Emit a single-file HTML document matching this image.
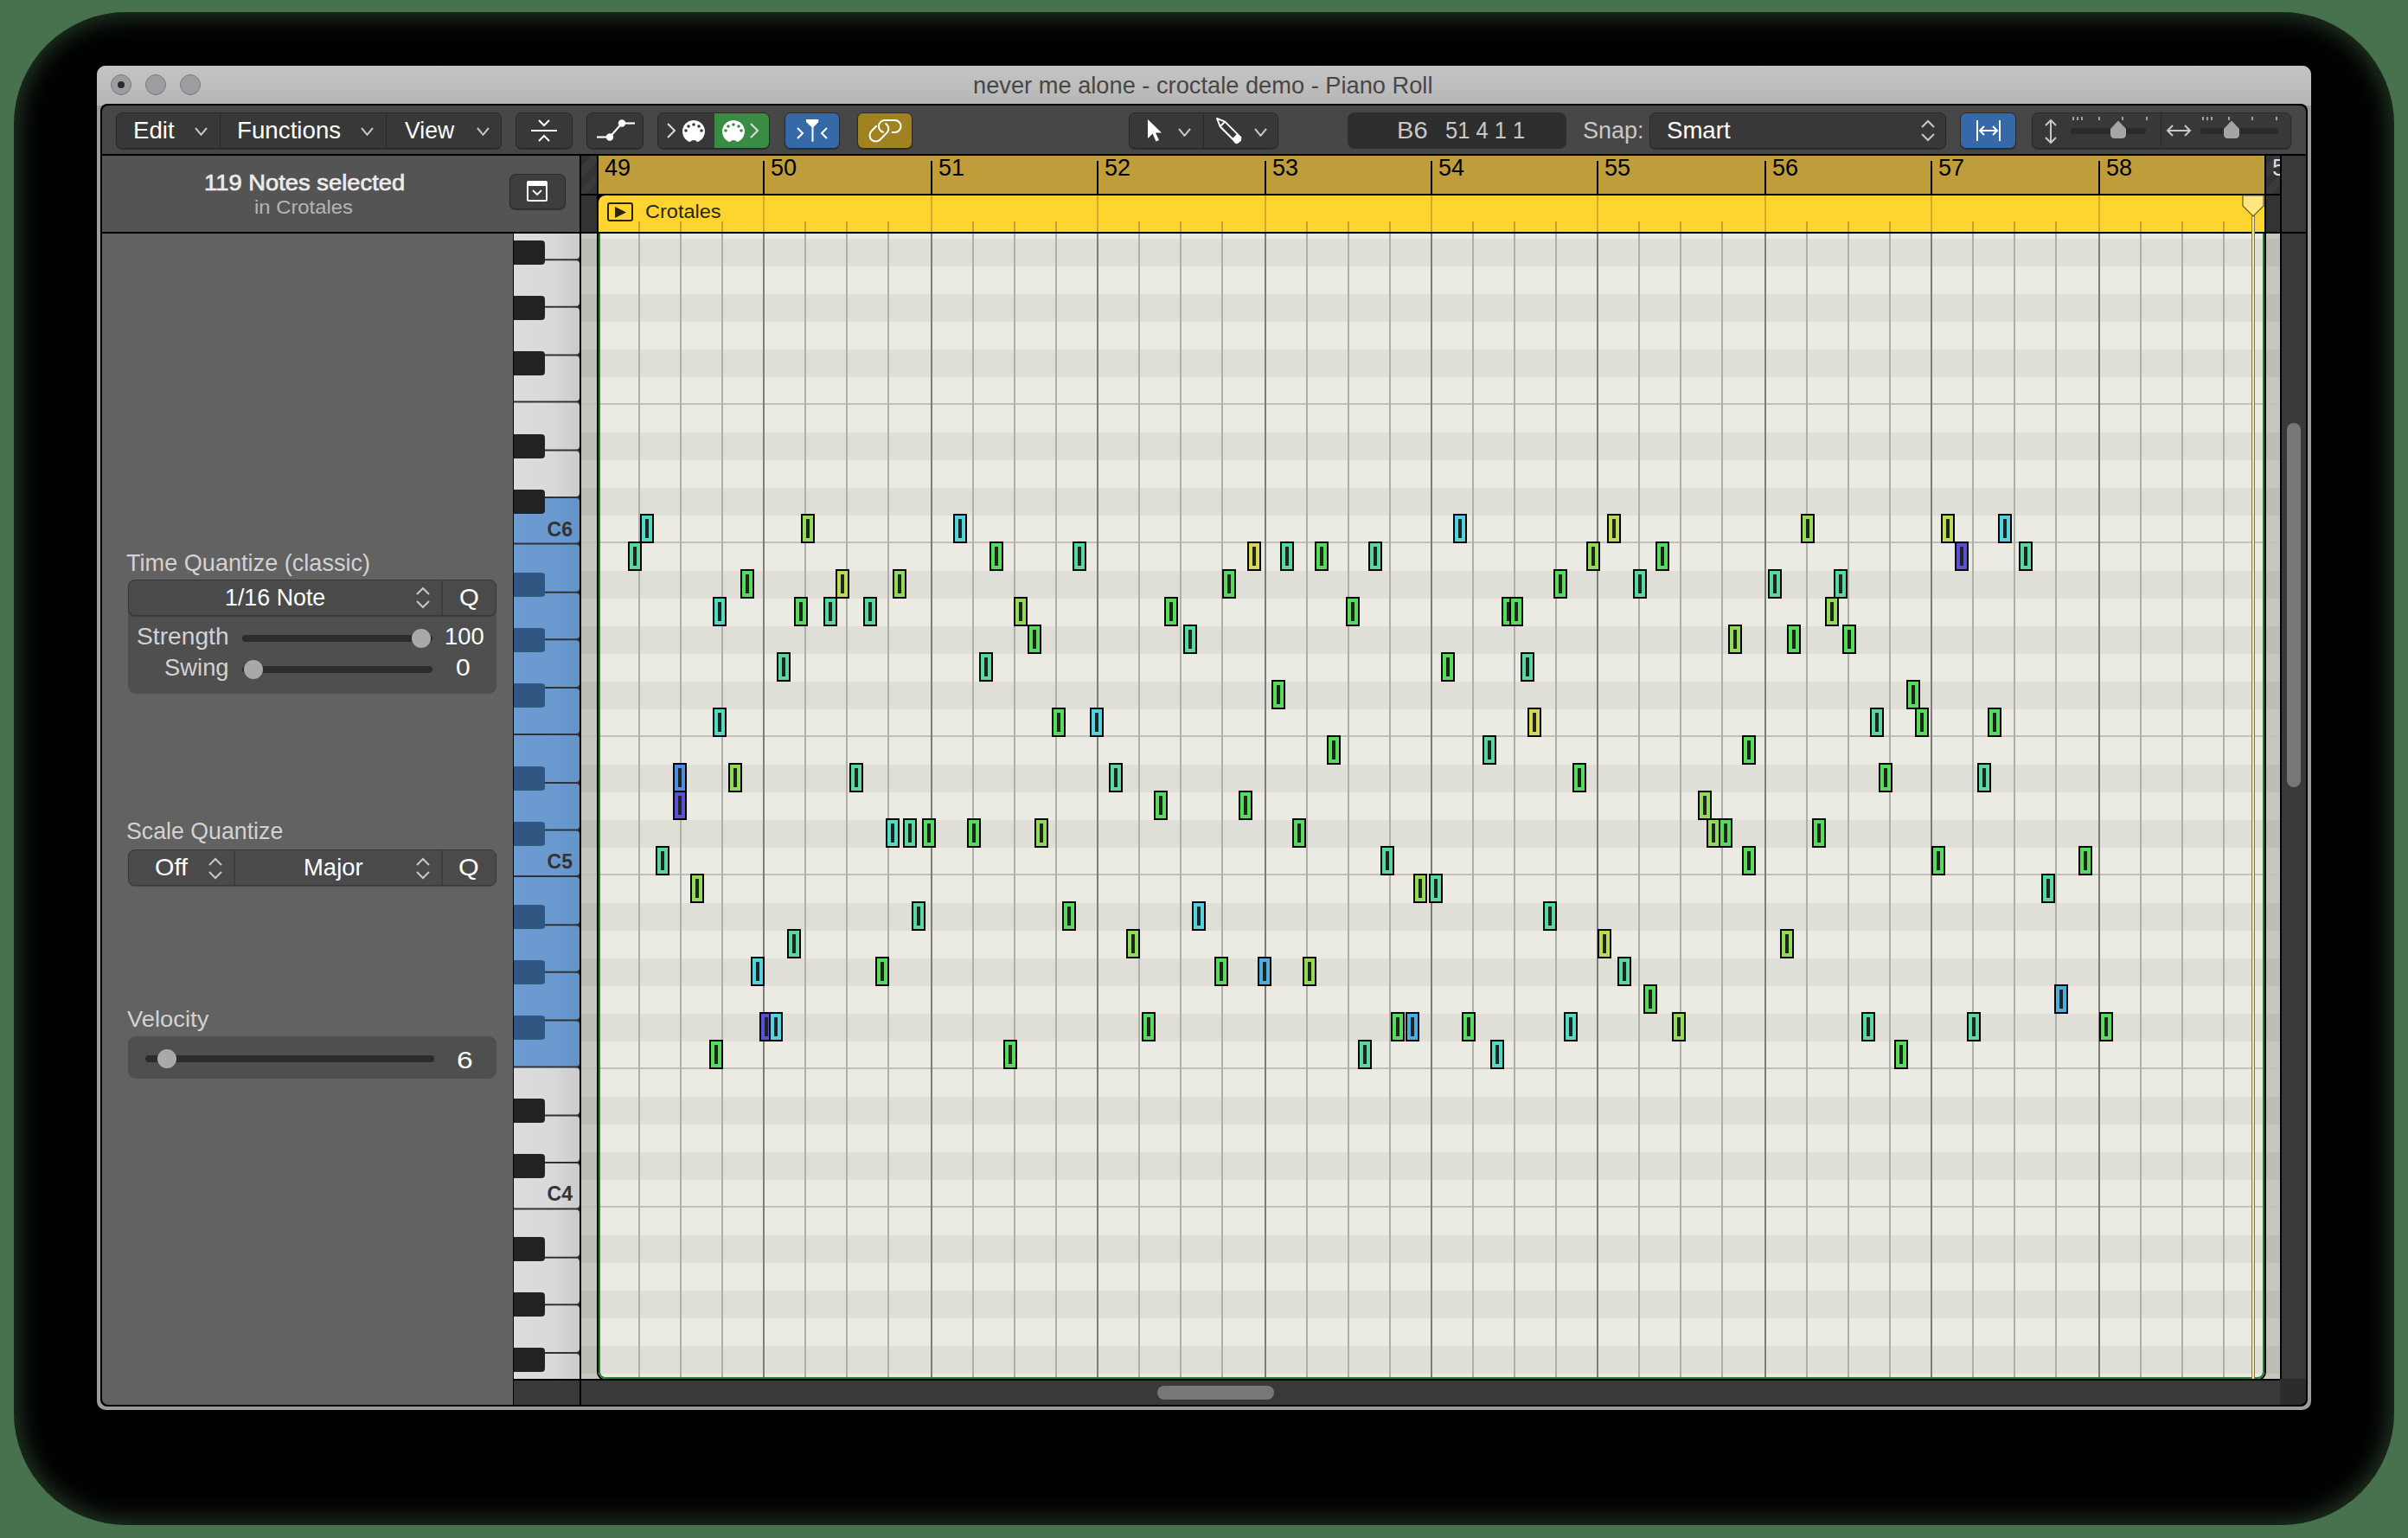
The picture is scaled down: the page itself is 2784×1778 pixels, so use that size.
<!DOCTYPE html>
<html><head><meta charset="utf-8"><title>Piano Roll</title>
<style>
*{box-sizing:border-box;margin:0;padding:0}
html,body{width:2784px;height:1778px;overflow:hidden;background:#48724e;font-family:"Liberation Sans", sans-serif}
.a{position:absolute}
.btn{position:absolute;background:#383838;border:1px solid #2a2a2a;border-radius:7px;box-shadow:0 1px 1px rgba(0,0,0,.35)}
.t{position:absolute;white-space:nowrap;line-height:1}
</style></head><body>

<div class="a" style="left:16px;top:14px;width:2752px;height:1749px;border-radius:130px;background:#000;box-shadow:inset 0 0 30px 4px rgba(72,114,78,0.55)"></div>
<div class="a" style="left:112px;top:76px;width:2560px;height:1554px;border-radius:10px;background:#9c9c9c"></div>
<div class="a" style="left:112px;top:76px;width:2560px;height:46px;border-radius:10px 10px 0 0;background:linear-gradient(#c4c4c4,#b6b6b6)"></div>
<div class="a" style="left:128px;top:86px;width:24px;height:24px;border-radius:50%;background:#9d9ca1;border:1px solid #7b7a7f"></div>
<div class="a" style="left:168px;top:86px;width:24px;height:24px;border-radius:50%;background:#9d9ca1;border:1px solid #7b7a7f"></div>
<div class="a" style="left:208px;top:86px;width:24px;height:24px;border-radius:50%;background:#9d9ca1;border:1px solid #7b7a7f"></div>
<div class="a" style="left:136px;top:94px;width:8px;height:8px;border-radius:50%;background:#2a2a2a"></div>
<div class="t" style="left:1124.69px;top:84.59px;font-size:27.54px;font-weight:normal;color:#474747;transform:scaleX(0.9895);transform-origin:0 0;">never me alone - croctale demo - Piano Roll</div>
<div class="a" style="left:116px;top:120px;width:2552px;height:1506px;background:#000;border-radius:8px 8px 8px 8px"></div>
<div class="a" style="left:118px;top:122px;width:2548px;height:56px;background:#474747;border-radius:7px 7px 0 0"></div>
<div class="a" style="left:118px;top:180px;width:552px;height:88px;background:#545454"></div>
<div class="a" style="left:672px;top:180px;width:18px;height:44px;background:repeating-linear-gradient(135deg,#333 0 9px,#3b3b3b 9px 18px)"></div>
<div class="a" style="left:672px;top:226px;width:18px;height:42px;background:#333"></div>
<div class="a" style="left:692px;top:180px;width:1926px;height:44px;background:#bf9d3b"></div>
<div class="a" style="left:692px;top:226px;width:1926px;height:42px;background:#fed42f;border-radius:8px 0 0 0"></div>
<div class="a" style="left:2620px;top:180px;width:16px;height:44px;background:repeating-linear-gradient(135deg,#333 0 9px,#3b3b3b 9px 18px)"></div>
<div class="a" style="left:2620px;top:226px;width:16px;height:42px;background:#333"></div>
<div class="a" style="left:2638px;top:180px;width:28px;height:88px;background:#393939"></div>
<div class="a" style="left:118px;top:270px;width:475px;height:1354px;background:#626262;border-radius:0 0 0 7px"></div>
<div class="a" style="left:594px;top:1596px;width:76px;height:28px;background:#393939"></div>
<div class="a" style="left:672px;top:1596px;width:1964px;height:28px;background:#393939"></div>
<div class="a" style="left:2638px;top:270px;width:28px;height:1324px;background:#393939"></div>
<div class="a" style="left:2636px;top:1594px;width:30px;height:30px;background:#2c2c2c;border-radius:0 0 7px 0"></div>
<div class="a" style="left:1338px;top:1602px;width:135px;height:16px;border-radius:8px;background:#777"></div>
<div class="a" style="left:2644px;top:489px;width:16px;height:421px;border-radius:8px;background:#777"></div>
<svg class="a" style="left:672px;top:270px" width="1964" height="1324" viewBox="672 270 1964 1324" shape-rendering="crispEdges"><defs><clipPath id="rg"><path d="M692,260 H2618 V1586 A8,8 0 0 1 2610,1594 H700 A8,8 0 0 1 692,1586 Z"/></clipPath></defs><rect x="672" y="270" width="1964" height="6" fill="#c7c7bf"/><rect x="672" y="276" width="1964" height="32" fill="#bdbdb5"/><rect x="672" y="308" width="1964" height="32" fill="#c7c7bf"/><rect x="672" y="340" width="1964" height="32" fill="#bdbdb5"/><rect x="672" y="372" width="1964" height="32" fill="#c7c7bf"/><rect x="672" y="404" width="1964" height="32" fill="#bdbdb5"/><rect x="672" y="436" width="1964" height="32" fill="#c7c7bf"/><rect x="672" y="468" width="1964" height="32" fill="#c7c7bf"/><rect x="672" y="500" width="1964" height="32" fill="#bdbdb5"/><rect x="672" y="532" width="1964" height="32" fill="#c7c7bf"/><rect x="672" y="564" width="1964" height="32" fill="#bdbdb5"/><rect x="672" y="596" width="1964" height="32" fill="#c7c7bf"/><rect x="672" y="628" width="1964" height="32" fill="#c7c7bf"/><rect x="672" y="660" width="1964" height="32" fill="#bdbdb5"/><rect x="672" y="692" width="1964" height="32" fill="#c7c7bf"/><rect x="672" y="724" width="1964" height="32" fill="#bdbdb5"/><rect x="672" y="756" width="1964" height="32" fill="#c7c7bf"/><rect x="672" y="788" width="1964" height="32" fill="#bdbdb5"/><rect x="672" y="820" width="1964" height="32" fill="#c7c7bf"/><rect x="672" y="852" width="1964" height="32" fill="#c7c7bf"/><rect x="672" y="884" width="1964" height="32" fill="#bdbdb5"/><rect x="672" y="916" width="1964" height="32" fill="#c7c7bf"/><rect x="672" y="948" width="1964" height="32" fill="#bdbdb5"/><rect x="672" y="980" width="1964" height="32" fill="#c7c7bf"/><rect x="672" y="1012" width="1964" height="32" fill="#c7c7bf"/><rect x="672" y="1044" width="1964" height="32" fill="#bdbdb5"/><rect x="672" y="1076" width="1964" height="32" fill="#c7c7bf"/><rect x="672" y="1108" width="1964" height="32" fill="#bdbdb5"/><rect x="672" y="1140" width="1964" height="32" fill="#c7c7bf"/><rect x="672" y="1172" width="1964" height="32" fill="#bdbdb5"/><rect x="672" y="1204" width="1964" height="32" fill="#c7c7bf"/><rect x="672" y="1236" width="1964" height="32" fill="#c7c7bf"/><rect x="672" y="1268" width="1964" height="32" fill="#bdbdb5"/><rect x="672" y="1300" width="1964" height="32" fill="#c7c7bf"/><rect x="672" y="1332" width="1964" height="32" fill="#bdbdb5"/><rect x="672" y="1364" width="1964" height="32" fill="#c7c7bf"/><rect x="672" y="1396" width="1964" height="32" fill="#c7c7bf"/><rect x="672" y="1428" width="1964" height="32" fill="#bdbdb5"/><rect x="672" y="1460" width="1964" height="32" fill="#c7c7bf"/><rect x="672" y="1492" width="1964" height="32" fill="#bdbdb5"/><rect x="672" y="1524" width="1964" height="32" fill="#c7c7bf"/><rect x="672" y="1556" width="1964" height="32" fill="#bdbdb5"/><rect x="672" y="1588" width="1964" height="6" fill="#c7c7bf"/><rect x="672" y="466" width="1964" height="2" fill="#c2c2ba"/><rect x="672" y="626" width="1964" height="2" fill="#c2c2ba"/><rect x="672" y="850" width="1964" height="2" fill="#c2c2ba"/><rect x="672" y="1010" width="1964" height="2" fill="#c2c2ba"/><rect x="672" y="1234" width="1964" height="2" fill="#c2c2ba"/><rect x="672" y="1394" width="1964" height="2" fill="#c2c2ba"/><path d="M690,260 V1586 A10,10 0 0 0 700,1596 H2610 A10,10 0 0 0 2620,1586 V260 Z" fill="#000" shape-rendering="auto"/><g clip-path="url(#rg)"><rect x="692" y="270" width="1926" height="6" fill="#ebebe3"/><rect x="692" y="276" width="1926" height="32" fill="#dfdfd7"/><rect x="692" y="308" width="1926" height="32" fill="#ebebe3"/><rect x="692" y="340" width="1926" height="32" fill="#dfdfd7"/><rect x="692" y="372" width="1926" height="32" fill="#ebebe3"/><rect x="692" y="404" width="1926" height="32" fill="#dfdfd7"/><rect x="692" y="436" width="1926" height="32" fill="#ebebe3"/><rect x="692" y="468" width="1926" height="32" fill="#ebebe3"/><rect x="692" y="500" width="1926" height="32" fill="#dfdfd7"/><rect x="692" y="532" width="1926" height="32" fill="#ebebe3"/><rect x="692" y="564" width="1926" height="32" fill="#dfdfd7"/><rect x="692" y="596" width="1926" height="32" fill="#ebebe3"/><rect x="692" y="628" width="1926" height="32" fill="#ebebe3"/><rect x="692" y="660" width="1926" height="32" fill="#dfdfd7"/><rect x="692" y="692" width="1926" height="32" fill="#ebebe3"/><rect x="692" y="724" width="1926" height="32" fill="#dfdfd7"/><rect x="692" y="756" width="1926" height="32" fill="#ebebe3"/><rect x="692" y="788" width="1926" height="32" fill="#dfdfd7"/><rect x="692" y="820" width="1926" height="32" fill="#ebebe3"/><rect x="692" y="852" width="1926" height="32" fill="#ebebe3"/><rect x="692" y="884" width="1926" height="32" fill="#dfdfd7"/><rect x="692" y="916" width="1926" height="32" fill="#ebebe3"/><rect x="692" y="948" width="1926" height="32" fill="#dfdfd7"/><rect x="692" y="980" width="1926" height="32" fill="#ebebe3"/><rect x="692" y="1012" width="1926" height="32" fill="#ebebe3"/><rect x="692" y="1044" width="1926" height="32" fill="#dfdfd7"/><rect x="692" y="1076" width="1926" height="32" fill="#ebebe3"/><rect x="692" y="1108" width="1926" height="32" fill="#dfdfd7"/><rect x="692" y="1140" width="1926" height="32" fill="#ebebe3"/><rect x="692" y="1172" width="1926" height="32" fill="#dfdfd7"/><rect x="692" y="1204" width="1926" height="32" fill="#ebebe3"/><rect x="692" y="1236" width="1926" height="32" fill="#ebebe3"/><rect x="692" y="1268" width="1926" height="32" fill="#dfdfd7"/><rect x="692" y="1300" width="1926" height="32" fill="#ebebe3"/><rect x="692" y="1332" width="1926" height="32" fill="#dfdfd7"/><rect x="692" y="1364" width="1926" height="32" fill="#ebebe3"/><rect x="692" y="1396" width="1926" height="32" fill="#ebebe3"/><rect x="692" y="1428" width="1926" height="32" fill="#dfdfd7"/><rect x="692" y="1460" width="1926" height="32" fill="#ebebe3"/><rect x="692" y="1492" width="1926" height="32" fill="#dfdfd7"/><rect x="692" y="1524" width="1926" height="32" fill="#ebebe3"/><rect x="692" y="1556" width="1926" height="32" fill="#dfdfd7"/><rect x="692" y="1588" width="1926" height="6" fill="#ebebe3"/><rect x="672" y="466" width="1964" height="2" fill="#c2c2ba"/><rect x="672" y="626" width="1964" height="2" fill="#c2c2ba"/><rect x="672" y="850" width="1964" height="2" fill="#c2c2ba"/><rect x="672" y="1010" width="1964" height="2" fill="#c2c2ba"/><rect x="672" y="1234" width="1964" height="2" fill="#c2c2ba"/><rect x="672" y="1394" width="1964" height="2" fill="#c2c2ba"/><rect x="738" y="270" width="2" height="1324" fill="#afafaa"/><rect x="786" y="270" width="2" height="1324" fill="#afafaa"/><rect x="834" y="270" width="2" height="1324" fill="#afafaa"/><rect x="882" y="270" width="2" height="1324" fill="#7c7d79"/><rect x="930" y="270" width="2" height="1324" fill="#afafaa"/><rect x="978" y="270" width="2" height="1324" fill="#afafaa"/><rect x="1026" y="270" width="2" height="1324" fill="#afafaa"/><rect x="1076" y="270" width="2" height="1324" fill="#7c7d79"/><rect x="1124" y="270" width="2" height="1324" fill="#afafaa"/><rect x="1172" y="270" width="2" height="1324" fill="#afafaa"/><rect x="1220" y="270" width="2" height="1324" fill="#afafaa"/><rect x="1268" y="270" width="2" height="1324" fill="#7c7d79"/><rect x="1316" y="270" width="2" height="1324" fill="#afafaa"/><rect x="1364" y="270" width="2" height="1324" fill="#afafaa"/><rect x="1412" y="270" width="2" height="1324" fill="#afafaa"/><rect x="1462" y="270" width="2" height="1324" fill="#7c7d79"/><rect x="1510" y="270" width="2" height="1324" fill="#afafaa"/><rect x="1558" y="270" width="2" height="1324" fill="#afafaa"/><rect x="1606" y="270" width="2" height="1324" fill="#afafaa"/><rect x="1654" y="270" width="2" height="1324" fill="#7c7d79"/><rect x="1702" y="270" width="2" height="1324" fill="#afafaa"/><rect x="1750" y="270" width="2" height="1324" fill="#afafaa"/><rect x="1798" y="270" width="2" height="1324" fill="#afafaa"/><rect x="1846" y="270" width="2" height="1324" fill="#7c7d79"/><rect x="1894" y="270" width="2" height="1324" fill="#afafaa"/><rect x="1942" y="270" width="2" height="1324" fill="#afafaa"/><rect x="1990" y="270" width="2" height="1324" fill="#afafaa"/><rect x="2040" y="270" width="2" height="1324" fill="#7c7d79"/><rect x="2088" y="270" width="2" height="1324" fill="#afafaa"/><rect x="2136" y="270" width="2" height="1324" fill="#afafaa"/><rect x="2184" y="270" width="2" height="1324" fill="#afafaa"/><rect x="2232" y="270" width="2" height="1324" fill="#7c7d79"/><rect x="2280" y="270" width="2" height="1324" fill="#afafaa"/><rect x="2328" y="270" width="2" height="1324" fill="#afafaa"/><rect x="2376" y="270" width="2" height="1324" fill="#afafaa"/><rect x="2426" y="270" width="2" height="1324" fill="#7c7d79"/><rect x="2474" y="270" width="2" height="1324" fill="#afafaa"/><rect x="2522" y="270" width="2" height="1324" fill="#afafaa"/><rect x="2570" y="270" width="2" height="1324" fill="#afafaa"/><rect x="740" y="594" width="16" height="34" fill="#000"/><rect x="742" y="596" width="12" height="30" fill="#50dcc4"/><rect x="746" y="600" width="4" height="22" fill="#1f2420"/><rect x="726" y="626" width="16" height="34" fill="#000"/><rect x="728" y="628" width="12" height="30" fill="#55d99c"/><rect x="732" y="632" width="4" height="22" fill="#1f2420"/><rect x="926" y="594" width="16" height="34" fill="#000"/><rect x="928" y="596" width="12" height="30" fill="#90dc55"/><rect x="932" y="600" width="4" height="22" fill="#1f2420"/><rect x="1102" y="594" width="16" height="34" fill="#000"/><rect x="1104" y="596" width="12" height="30" fill="#50d4e0"/><rect x="1108" y="600" width="4" height="22" fill="#1f2420"/><rect x="1144" y="626" width="16" height="34" fill="#000"/><rect x="1146" y="628" width="12" height="30" fill="#55dc58"/><rect x="1150" y="632" width="4" height="22" fill="#1f2420"/><rect x="856" y="658" width="16" height="34" fill="#000"/><rect x="858" y="660" width="12" height="30" fill="#55dc58"/><rect x="862" y="664" width="4" height="22" fill="#1f2420"/><rect x="966" y="658" width="16" height="34" fill="#000"/><rect x="968" y="660" width="12" height="30" fill="#bcdc50"/><rect x="972" y="664" width="4" height="22" fill="#1f2420"/><rect x="1032" y="658" width="16" height="34" fill="#000"/><rect x="1034" y="660" width="12" height="30" fill="#90dc55"/><rect x="1038" y="664" width="4" height="22" fill="#1f2420"/><rect x="824" y="690" width="16" height="34" fill="#000"/><rect x="826" y="692" width="12" height="30" fill="#50dcc4"/><rect x="830" y="696" width="4" height="22" fill="#1f2420"/><rect x="918" y="690" width="16" height="34" fill="#000"/><rect x="920" y="692" width="12" height="30" fill="#55dc58"/><rect x="924" y="696" width="4" height="22" fill="#1f2420"/><rect x="952" y="690" width="16" height="34" fill="#000"/><rect x="954" y="692" width="12" height="30" fill="#55d99c"/><rect x="958" y="696" width="4" height="22" fill="#1f2420"/><rect x="998" y="690" width="16" height="34" fill="#000"/><rect x="1000" y="692" width="12" height="30" fill="#55d99c"/><rect x="1004" y="696" width="4" height="22" fill="#1f2420"/><rect x="898" y="754" width="16" height="34" fill="#000"/><rect x="900" y="756" width="12" height="30" fill="#55d99c"/><rect x="904" y="760" width="4" height="22" fill="#1f2420"/><rect x="1132" y="754" width="16" height="34" fill="#000"/><rect x="1134" y="756" width="12" height="30" fill="#55d99c"/><rect x="1138" y="760" width="4" height="22" fill="#1f2420"/><rect x="824" y="818" width="16" height="34" fill="#000"/><rect x="826" y="820" width="12" height="30" fill="#50dcc4"/><rect x="830" y="824" width="4" height="22" fill="#1f2420"/><rect x="778" y="882" width="16" height="34" fill="#000"/><rect x="780" y="884" width="12" height="30" fill="#4a8ee0"/><rect x="784" y="888" width="4" height="22" fill="#1f2420"/><rect x="842" y="882" width="16" height="34" fill="#000"/><rect x="844" y="884" width="12" height="30" fill="#90dc55"/><rect x="848" y="888" width="4" height="22" fill="#1f2420"/><rect x="982" y="882" width="16" height="34" fill="#000"/><rect x="984" y="884" width="12" height="30" fill="#55d99c"/><rect x="988" y="888" width="4" height="22" fill="#1f2420"/><rect x="778" y="914" width="16" height="34" fill="#000"/><rect x="780" y="916" width="12" height="30" fill="#5b4fd8"/><rect x="784" y="920" width="4" height="22" fill="#1f2420"/><rect x="1024" y="946" width="16" height="34" fill="#000"/><rect x="1026" y="948" width="12" height="30" fill="#50dcc4"/><rect x="1030" y="952" width="4" height="22" fill="#1f2420"/><rect x="1044" y="946" width="16" height="34" fill="#000"/><rect x="1046" y="948" width="12" height="30" fill="#55d99c"/><rect x="1050" y="952" width="4" height="22" fill="#1f2420"/><rect x="1066" y="946" width="16" height="34" fill="#000"/><rect x="1068" y="948" width="12" height="30" fill="#55dc58"/><rect x="1072" y="952" width="4" height="22" fill="#1f2420"/><rect x="1118" y="946" width="16" height="34" fill="#000"/><rect x="1120" y="948" width="12" height="30" fill="#55dc58"/><rect x="1124" y="952" width="4" height="22" fill="#1f2420"/><rect x="758" y="978" width="16" height="34" fill="#000"/><rect x="760" y="980" width="12" height="30" fill="#55d99c"/><rect x="764" y="984" width="4" height="22" fill="#1f2420"/><rect x="798" y="1010" width="16" height="34" fill="#000"/><rect x="800" y="1012" width="12" height="30" fill="#90dc55"/><rect x="804" y="1016" width="4" height="22" fill="#1f2420"/><rect x="1054" y="1042" width="16" height="34" fill="#000"/><rect x="1056" y="1044" width="12" height="30" fill="#55d99c"/><rect x="1060" y="1048" width="4" height="22" fill="#1f2420"/><rect x="910" y="1074" width="16" height="34" fill="#000"/><rect x="912" y="1076" width="12" height="30" fill="#55d99c"/><rect x="916" y="1080" width="4" height="22" fill="#1f2420"/><rect x="868" y="1106" width="16" height="34" fill="#000"/><rect x="870" y="1108" width="12" height="30" fill="#50d4e0"/><rect x="874" y="1112" width="4" height="22" fill="#1f2420"/><rect x="1012" y="1106" width="16" height="34" fill="#000"/><rect x="1014" y="1108" width="12" height="30" fill="#55dc58"/><rect x="1018" y="1112" width="4" height="22" fill="#1f2420"/><rect x="878" y="1170" width="16" height="34" fill="#000"/><rect x="880" y="1172" width="12" height="30" fill="#5b4fd8"/><rect x="884" y="1176" width="4" height="22" fill="#1f2420"/><rect x="889" y="1170" width="16" height="34" fill="#000"/><rect x="891" y="1172" width="12" height="30" fill="#50d4e0"/><rect x="895" y="1176" width="4" height="22" fill="#1f2420"/><rect x="820" y="1202" width="16" height="34" fill="#000"/><rect x="822" y="1204" width="12" height="30" fill="#55dc58"/><rect x="826" y="1208" width="4" height="22" fill="#1f2420"/><rect x="1160" y="1202" width="16" height="34" fill="#000"/><rect x="1162" y="1204" width="12" height="30" fill="#55dc58"/><rect x="1166" y="1208" width="4" height="22" fill="#1f2420"/><rect x="1240" y="626" width="16" height="34" fill="#000"/><rect x="1242" y="628" width="12" height="30" fill="#55d99c"/><rect x="1246" y="632" width="4" height="22" fill="#1f2420"/><rect x="1442" y="626" width="16" height="34" fill="#000"/><rect x="1444" y="628" width="12" height="30" fill="#d8d850"/><rect x="1448" y="632" width="4" height="22" fill="#1f2420"/><rect x="1480" y="626" width="16" height="34" fill="#000"/><rect x="1482" y="628" width="12" height="30" fill="#55d99c"/><rect x="1486" y="632" width="4" height="22" fill="#1f2420"/><rect x="1520" y="626" width="16" height="34" fill="#000"/><rect x="1522" y="628" width="12" height="30" fill="#55dc58"/><rect x="1526" y="632" width="4" height="22" fill="#1f2420"/><rect x="1582" y="626" width="16" height="34" fill="#000"/><rect x="1584" y="628" width="12" height="30" fill="#55d99c"/><rect x="1588" y="632" width="4" height="22" fill="#1f2420"/><rect x="1413" y="658" width="16" height="34" fill="#000"/><rect x="1415" y="660" width="12" height="30" fill="#55dc58"/><rect x="1419" y="664" width="4" height="22" fill="#1f2420"/><rect x="1172" y="690" width="16" height="34" fill="#000"/><rect x="1174" y="692" width="12" height="30" fill="#90dc55"/><rect x="1178" y="696" width="4" height="22" fill="#1f2420"/><rect x="1346" y="690" width="16" height="34" fill="#000"/><rect x="1348" y="692" width="12" height="30" fill="#55dc58"/><rect x="1352" y="696" width="4" height="22" fill="#1f2420"/><rect x="1556" y="690" width="16" height="34" fill="#000"/><rect x="1558" y="692" width="12" height="30" fill="#55dc58"/><rect x="1562" y="696" width="4" height="22" fill="#1f2420"/><rect x="1188" y="722" width="16" height="34" fill="#000"/><rect x="1190" y="724" width="12" height="30" fill="#55dc58"/><rect x="1194" y="728" width="4" height="22" fill="#1f2420"/><rect x="1368" y="722" width="16" height="34" fill="#000"/><rect x="1370" y="724" width="12" height="30" fill="#55d99c"/><rect x="1374" y="728" width="4" height="22" fill="#1f2420"/><rect x="1470" y="786" width="16" height="34" fill="#000"/><rect x="1472" y="788" width="12" height="30" fill="#55dc58"/><rect x="1476" y="792" width="4" height="22" fill="#1f2420"/><rect x="1216" y="818" width="16" height="34" fill="#000"/><rect x="1218" y="820" width="12" height="30" fill="#55dc58"/><rect x="1222" y="824" width="4" height="22" fill="#1f2420"/><rect x="1260" y="818" width="16" height="34" fill="#000"/><rect x="1262" y="820" width="12" height="30" fill="#50d4e0"/><rect x="1266" y="824" width="4" height="22" fill="#1f2420"/><rect x="1534" y="850" width="16" height="34" fill="#000"/><rect x="1536" y="852" width="12" height="30" fill="#55dc58"/><rect x="1540" y="856" width="4" height="22" fill="#1f2420"/><rect x="1282" y="882" width="16" height="34" fill="#000"/><rect x="1284" y="884" width="12" height="30" fill="#55d99c"/><rect x="1288" y="888" width="4" height="22" fill="#1f2420"/><rect x="1334" y="914" width="16" height="34" fill="#000"/><rect x="1336" y="916" width="12" height="30" fill="#55dc58"/><rect x="1340" y="920" width="4" height="22" fill="#1f2420"/><rect x="1432" y="914" width="16" height="34" fill="#000"/><rect x="1434" y="916" width="12" height="30" fill="#55dc58"/><rect x="1438" y="920" width="4" height="22" fill="#1f2420"/><rect x="1196" y="946" width="16" height="34" fill="#000"/><rect x="1198" y="948" width="12" height="30" fill="#90dc55"/><rect x="1202" y="952" width="4" height="22" fill="#1f2420"/><rect x="1494" y="946" width="16" height="34" fill="#000"/><rect x="1496" y="948" width="12" height="30" fill="#55dc58"/><rect x="1500" y="952" width="4" height="22" fill="#1f2420"/><rect x="1596" y="978" width="16" height="34" fill="#000"/><rect x="1598" y="980" width="12" height="30" fill="#55d99c"/><rect x="1602" y="984" width="4" height="22" fill="#1f2420"/><rect x="1634" y="1010" width="16" height="34" fill="#000"/><rect x="1636" y="1012" width="12" height="30" fill="#90dc55"/><rect x="1640" y="1016" width="4" height="22" fill="#1f2420"/><rect x="1228" y="1042" width="16" height="34" fill="#000"/><rect x="1230" y="1044" width="12" height="30" fill="#55dc58"/><rect x="1234" y="1048" width="4" height="22" fill="#1f2420"/><rect x="1378" y="1042" width="16" height="34" fill="#000"/><rect x="1380" y="1044" width="12" height="30" fill="#50d4e0"/><rect x="1384" y="1048" width="4" height="22" fill="#1f2420"/><rect x="1302" y="1074" width="16" height="34" fill="#000"/><rect x="1304" y="1076" width="12" height="30" fill="#90dc55"/><rect x="1308" y="1080" width="4" height="22" fill="#1f2420"/><rect x="1404" y="1106" width="16" height="34" fill="#000"/><rect x="1406" y="1108" width="12" height="30" fill="#55dc58"/><rect x="1410" y="1112" width="4" height="22" fill="#1f2420"/><rect x="1454" y="1106" width="16" height="34" fill="#000"/><rect x="1456" y="1108" width="12" height="30" fill="#4aaee0"/><rect x="1460" y="1112" width="4" height="22" fill="#1f2420"/><rect x="1506" y="1106" width="16" height="34" fill="#000"/><rect x="1508" y="1108" width="12" height="30" fill="#90dc55"/><rect x="1512" y="1112" width="4" height="22" fill="#1f2420"/><rect x="1320" y="1170" width="16" height="34" fill="#000"/><rect x="1322" y="1172" width="12" height="30" fill="#55dc58"/><rect x="1326" y="1176" width="4" height="22" fill="#1f2420"/><rect x="1608" y="1170" width="16" height="34" fill="#000"/><rect x="1610" y="1172" width="12" height="30" fill="#55dc58"/><rect x="1614" y="1176" width="4" height="22" fill="#1f2420"/><rect x="1625" y="1170" width="16" height="34" fill="#000"/><rect x="1627" y="1172" width="12" height="30" fill="#4aaee0"/><rect x="1631" y="1176" width="4" height="22" fill="#1f2420"/><rect x="1570" y="1202" width="16" height="34" fill="#000"/><rect x="1572" y="1204" width="12" height="30" fill="#55d99c"/><rect x="1576" y="1208" width="4" height="22" fill="#1f2420"/><rect x="1680" y="594" width="16" height="34" fill="#000"/><rect x="1682" y="596" width="12" height="30" fill="#50d4e0"/><rect x="1686" y="600" width="4" height="22" fill="#1f2420"/><rect x="1858" y="594" width="16" height="34" fill="#000"/><rect x="1860" y="596" width="12" height="30" fill="#bcdc50"/><rect x="1864" y="600" width="4" height="22" fill="#1f2420"/><rect x="2082" y="594" width="16" height="34" fill="#000"/><rect x="2084" y="596" width="12" height="30" fill="#90dc55"/><rect x="2088" y="600" width="4" height="22" fill="#1f2420"/><rect x="1834" y="626" width="16" height="34" fill="#000"/><rect x="1836" y="628" width="12" height="30" fill="#90dc55"/><rect x="1840" y="632" width="4" height="22" fill="#1f2420"/><rect x="1914" y="626" width="16" height="34" fill="#000"/><rect x="1916" y="628" width="12" height="30" fill="#55dc58"/><rect x="1920" y="632" width="4" height="22" fill="#1f2420"/><rect x="1796" y="658" width="16" height="34" fill="#000"/><rect x="1798" y="660" width="12" height="30" fill="#55dc58"/><rect x="1802" y="664" width="4" height="22" fill="#1f2420"/><rect x="1888" y="658" width="16" height="34" fill="#000"/><rect x="1890" y="660" width="12" height="30" fill="#55d99c"/><rect x="1894" y="664" width="4" height="22" fill="#1f2420"/><rect x="2044" y="658" width="16" height="34" fill="#000"/><rect x="2046" y="660" width="12" height="30" fill="#55d99c"/><rect x="2050" y="664" width="4" height="22" fill="#1f2420"/><rect x="1736" y="690" width="16" height="34" fill="#000"/><rect x="1738" y="692" width="12" height="30" fill="#55dc58"/><rect x="1742" y="696" width="4" height="22" fill="#1f2420"/><rect x="1745" y="690" width="16" height="34" fill="#000"/><rect x="1747" y="692" width="12" height="30" fill="#55dc58"/><rect x="1751" y="696" width="4" height="22" fill="#1f2420"/><rect x="1998" y="722" width="16" height="34" fill="#000"/><rect x="2000" y="724" width="12" height="30" fill="#90dc55"/><rect x="2004" y="728" width="4" height="22" fill="#1f2420"/><rect x="2066" y="722" width="16" height="34" fill="#000"/><rect x="2068" y="724" width="12" height="30" fill="#55dc58"/><rect x="2072" y="728" width="4" height="22" fill="#1f2420"/><rect x="1666" y="754" width="16" height="34" fill="#000"/><rect x="1668" y="756" width="12" height="30" fill="#55dc58"/><rect x="1672" y="760" width="4" height="22" fill="#1f2420"/><rect x="1758" y="754" width="16" height="34" fill="#000"/><rect x="1760" y="756" width="12" height="30" fill="#55d99c"/><rect x="1764" y="760" width="4" height="22" fill="#1f2420"/><rect x="1766" y="818" width="16" height="34" fill="#000"/><rect x="1768" y="820" width="12" height="30" fill="#d8d850"/><rect x="1772" y="824" width="4" height="22" fill="#1f2420"/><rect x="1714" y="850" width="16" height="34" fill="#000"/><rect x="1716" y="852" width="12" height="30" fill="#55d99c"/><rect x="1720" y="856" width="4" height="22" fill="#1f2420"/><rect x="2014" y="850" width="16" height="34" fill="#000"/><rect x="2016" y="852" width="12" height="30" fill="#55dc58"/><rect x="2020" y="856" width="4" height="22" fill="#1f2420"/><rect x="1818" y="882" width="16" height="34" fill="#000"/><rect x="1820" y="884" width="12" height="30" fill="#55dc58"/><rect x="1824" y="888" width="4" height="22" fill="#1f2420"/><rect x="1963" y="914" width="16" height="34" fill="#000"/><rect x="1965" y="916" width="12" height="30" fill="#90dc55"/><rect x="1969" y="920" width="4" height="22" fill="#1f2420"/><rect x="1973" y="946" width="16" height="34" fill="#000"/><rect x="1975" y="948" width="12" height="30" fill="#90dc55"/><rect x="1979" y="952" width="4" height="22" fill="#1f2420"/><rect x="1987" y="946" width="16" height="34" fill="#000"/><rect x="1989" y="948" width="12" height="30" fill="#55dc58"/><rect x="1993" y="952" width="4" height="22" fill="#1f2420"/><rect x="2095" y="946" width="16" height="34" fill="#000"/><rect x="2097" y="948" width="12" height="30" fill="#55dc58"/><rect x="2101" y="952" width="4" height="22" fill="#1f2420"/><rect x="2014" y="978" width="16" height="34" fill="#000"/><rect x="2016" y="980" width="12" height="30" fill="#55dc58"/><rect x="2020" y="984" width="4" height="22" fill="#1f2420"/><rect x="1652" y="1010" width="16" height="34" fill="#000"/><rect x="1654" y="1012" width="12" height="30" fill="#55d99c"/><rect x="1658" y="1016" width="4" height="22" fill="#1f2420"/><rect x="1784" y="1042" width="16" height="34" fill="#000"/><rect x="1786" y="1044" width="12" height="30" fill="#55d99c"/><rect x="1790" y="1048" width="4" height="22" fill="#1f2420"/><rect x="1847" y="1074" width="16" height="34" fill="#000"/><rect x="1849" y="1076" width="12" height="30" fill="#bcdc50"/><rect x="1853" y="1080" width="4" height="22" fill="#1f2420"/><rect x="2058" y="1074" width="16" height="34" fill="#000"/><rect x="2060" y="1076" width="12" height="30" fill="#90dc55"/><rect x="2064" y="1080" width="4" height="22" fill="#1f2420"/><rect x="1870" y="1106" width="16" height="34" fill="#000"/><rect x="1872" y="1108" width="12" height="30" fill="#55d99c"/><rect x="1876" y="1112" width="4" height="22" fill="#1f2420"/><rect x="1900" y="1138" width="16" height="34" fill="#000"/><rect x="1902" y="1140" width="12" height="30" fill="#55dc58"/><rect x="1906" y="1144" width="4" height="22" fill="#1f2420"/><rect x="1690" y="1170" width="16" height="34" fill="#000"/><rect x="1692" y="1172" width="12" height="30" fill="#55dc58"/><rect x="1696" y="1176" width="4" height="22" fill="#1f2420"/><rect x="1808" y="1170" width="16" height="34" fill="#000"/><rect x="1810" y="1172" width="12" height="30" fill="#50dcc4"/><rect x="1814" y="1176" width="4" height="22" fill="#1f2420"/><rect x="1933" y="1170" width="16" height="34" fill="#000"/><rect x="1935" y="1172" width="12" height="30" fill="#90dc55"/><rect x="1939" y="1176" width="4" height="22" fill="#1f2420"/><rect x="1723" y="1202" width="16" height="34" fill="#000"/><rect x="1725" y="1204" width="12" height="30" fill="#50dcc4"/><rect x="1729" y="1208" width="4" height="22" fill="#1f2420"/><rect x="2244" y="594" width="16" height="34" fill="#000"/><rect x="2246" y="596" width="12" height="30" fill="#bcdc50"/><rect x="2250" y="600" width="4" height="22" fill="#1f2420"/><rect x="2310" y="594" width="16" height="34" fill="#000"/><rect x="2312" y="596" width="12" height="30" fill="#50d4e0"/><rect x="2316" y="600" width="4" height="22" fill="#1f2420"/><rect x="2260" y="626" width="16" height="34" fill="#000"/><rect x="2262" y="628" width="12" height="30" fill="#5b4fd8"/><rect x="2266" y="632" width="4" height="22" fill="#1f2420"/><rect x="2334" y="626" width="16" height="34" fill="#000"/><rect x="2336" y="628" width="12" height="30" fill="#55d99c"/><rect x="2340" y="632" width="4" height="22" fill="#1f2420"/><rect x="2120" y="658" width="16" height="34" fill="#000"/><rect x="2122" y="660" width="12" height="30" fill="#55d99c"/><rect x="2126" y="664" width="4" height="22" fill="#1f2420"/><rect x="2110" y="690" width="16" height="34" fill="#000"/><rect x="2112" y="692" width="12" height="30" fill="#90dc55"/><rect x="2116" y="696" width="4" height="22" fill="#1f2420"/><rect x="2130" y="722" width="16" height="34" fill="#000"/><rect x="2132" y="724" width="12" height="30" fill="#55dc58"/><rect x="2136" y="728" width="4" height="22" fill="#1f2420"/><rect x="2204" y="786" width="16" height="34" fill="#000"/><rect x="2206" y="788" width="12" height="30" fill="#55dc58"/><rect x="2210" y="792" width="4" height="22" fill="#1f2420"/><rect x="2162" y="818" width="16" height="34" fill="#000"/><rect x="2164" y="820" width="12" height="30" fill="#55d99c"/><rect x="2168" y="824" width="4" height="22" fill="#1f2420"/><rect x="2214" y="818" width="16" height="34" fill="#000"/><rect x="2216" y="820" width="12" height="30" fill="#55dc58"/><rect x="2220" y="824" width="4" height="22" fill="#1f2420"/><rect x="2298" y="818" width="16" height="34" fill="#000"/><rect x="2300" y="820" width="12" height="30" fill="#55dc58"/><rect x="2304" y="824" width="4" height="22" fill="#1f2420"/><rect x="2172" y="882" width="16" height="34" fill="#000"/><rect x="2174" y="884" width="12" height="30" fill="#55dc58"/><rect x="2178" y="888" width="4" height="22" fill="#1f2420"/><rect x="2286" y="882" width="16" height="34" fill="#000"/><rect x="2288" y="884" width="12" height="30" fill="#55d99c"/><rect x="2292" y="888" width="4" height="22" fill="#1f2420"/><rect x="2233" y="978" width="16" height="34" fill="#000"/><rect x="2235" y="980" width="12" height="30" fill="#55dc58"/><rect x="2239" y="984" width="4" height="22" fill="#1f2420"/><rect x="2403" y="978" width="16" height="34" fill="#000"/><rect x="2405" y="980" width="12" height="30" fill="#55dc58"/><rect x="2409" y="984" width="4" height="22" fill="#1f2420"/><rect x="2360" y="1010" width="16" height="34" fill="#000"/><rect x="2362" y="1012" width="12" height="30" fill="#55d99c"/><rect x="2366" y="1016" width="4" height="22" fill="#1f2420"/><rect x="2375" y="1138" width="16" height="34" fill="#000"/><rect x="2377" y="1140" width="12" height="30" fill="#4aaee0"/><rect x="2381" y="1144" width="4" height="22" fill="#1f2420"/><rect x="2152" y="1170" width="16" height="34" fill="#000"/><rect x="2154" y="1172" width="12" height="30" fill="#55d99c"/><rect x="2158" y="1176" width="4" height="22" fill="#1f2420"/><rect x="2274" y="1170" width="16" height="34" fill="#000"/><rect x="2276" y="1172" width="12" height="30" fill="#55d99c"/><rect x="2280" y="1176" width="4" height="22" fill="#1f2420"/><rect x="2427" y="1170" width="16" height="34" fill="#000"/><rect x="2429" y="1172" width="12" height="30" fill="#55dc58"/><rect x="2433" y="1176" width="4" height="22" fill="#1f2420"/><rect x="2190" y="1202" width="16" height="34" fill="#000"/><rect x="2192" y="1204" width="12" height="30" fill="#55dc58"/><rect x="2196" y="1208" width="4" height="22" fill="#1f2420"/><path d="M693,260 V1586 A7,7 0 0 0 700,1593 H2610 A7,7 0 0 0 2617,1586 V260" fill="none" stroke="#1e7f2e" stroke-width="2" shape-rendering="auto"/></g></svg>
<div class="a" style="left:2603px;top:240px;width:4px;height:1354px;background:#777"></div>
<div class="a" style="left:2604px;top:240px;width:2px;height:1354px;background:#ffe680"></div>
<svg class="a" style="left:594px;top:270px" width="76" height="1324" viewBox="594 270 76 1324"><defs><linearGradient id="wk" gradientUnits="userSpaceOnUse" x1="594" x2="670" y1="0" y2="0"><stop offset="0" stop-color="#dcdcde"/><stop offset="0.6" stop-color="#d9d9db"/><stop offset="1" stop-color="#cbcbcd"/></linearGradient><linearGradient id="bk" gradientUnits="userSpaceOnUse" x1="594" x2="670" y1="0" y2="0"><stop offset="0" stop-color="#6c9bd2"/><stop offset="0.6" stop-color="#6a99cf"/><stop offset="1" stop-color="#6394c8"/></linearGradient></defs><rect x="594" y="270" width="76" height="1324" fill="#333"/><rect x="588" y="245.0" width="82" height="54.3" rx="4" fill="url(#wk)"/><rect x="588" y="301.3" width="82" height="52.4" rx="4" fill="url(#wk)"/><rect x="588" y="355.7" width="82" height="53.9" rx="4" fill="url(#wk)"/><rect x="588" y="411.6" width="82" height="51.9" rx="4" fill="url(#wk)"/><rect x="588" y="465.5" width="82" height="54.1" rx="4" fill="url(#wk)"/><rect x="588" y="521.6" width="82" height="52.3" rx="4" fill="url(#wk)"/><rect x="588" y="575.9" width="82" height="51.6" rx="4" fill="url(#bk)"/><rect x="588" y="629.5" width="82" height="54.3" rx="4" fill="url(#bk)"/><rect x="588" y="685.8" width="82" height="52.4" rx="4" fill="url(#bk)"/><rect x="588" y="740.2" width="82" height="53.9" rx="4" fill="url(#bk)"/><rect x="588" y="796.1" width="82" height="51.9" rx="4" fill="url(#bk)"/><rect x="588" y="850.0" width="82" height="54.1" rx="4" fill="url(#bk)"/><rect x="588" y="906.1" width="82" height="52.3" rx="4" fill="url(#bk)"/><rect x="588" y="960.4" width="82" height="51.6" rx="4" fill="url(#bk)"/><rect x="588" y="1014.0" width="82" height="54.3" rx="4" fill="url(#bk)"/><rect x="588" y="1070.3" width="82" height="52.4" rx="4" fill="url(#bk)"/><rect x="588" y="1124.7" width="82" height="53.9" rx="4" fill="url(#bk)"/><rect x="588" y="1180.6" width="82" height="51.9" rx="4" fill="url(#bk)"/><rect x="588" y="1234.5" width="82" height="54.1" rx="4" fill="url(#wk)"/><rect x="588" y="1290.6" width="82" height="52.3" rx="4" fill="url(#wk)"/><rect x="588" y="1344.9" width="82" height="51.6" rx="4" fill="url(#wk)"/><rect x="588" y="1398.5" width="82" height="54.3" rx="4" fill="url(#wk)"/><rect x="588" y="1454.8" width="82" height="52.4" rx="4" fill="url(#wk)"/><rect x="588" y="1509.2" width="82" height="53.9" rx="4" fill="url(#wk)"/><rect x="588" y="1565.1" width="82" height="51.9" rx="4" fill="url(#wk)"/><rect x="590" y="278" width="40" height="28" rx="4" fill="#222222"/><rect x="590" y="342" width="40" height="28" rx="4" fill="#222222"/><rect x="590" y="406" width="40" height="28" rx="4" fill="#222222"/><rect x="590" y="502" width="40" height="28" rx="4" fill="#222222"/><rect x="590" y="566" width="40" height="28" rx="4" fill="#222222"/><rect x="590" y="662" width="40" height="28" rx="4" fill="#2f5781"/><rect x="590" y="726" width="40" height="28" rx="4" fill="#2f5781"/><rect x="590" y="790" width="40" height="28" rx="4" fill="#2f5781"/><rect x="590" y="886" width="40" height="28" rx="4" fill="#2f5781"/><rect x="590" y="950" width="40" height="28" rx="4" fill="#2f5781"/><rect x="590" y="1046" width="40" height="28" rx="4" fill="#2f5781"/><rect x="590" y="1110" width="40" height="28" rx="4" fill="#2f5781"/><rect x="590" y="1174" width="40" height="28" rx="4" fill="#2f5781"/><rect x="590" y="1270" width="40" height="28" rx="4" fill="#222222"/><rect x="590" y="1334" width="40" height="28" rx="4" fill="#222222"/><rect x="590" y="1430" width="40" height="28" rx="4" fill="#222222"/><rect x="590" y="1494" width="40" height="28" rx="4" fill="#222222"/><rect x="590" y="1558" width="40" height="28" rx="4" fill="#222222"/></svg>
<div class="t" style="left:610px;top:601px;width:52px;text-align:right;font-size:23px;font-weight:bold;color:#333">C6</div>
<div class="t" style="left:610px;top:985px;width:52px;text-align:right;font-size:23px;font-weight:bold;color:#333">C5</div>
<div class="t" style="left:610px;top:1369px;width:52px;text-align:right;font-size:23px;font-weight:bold;color:#333">C4</div>
<div class="a" style="left:882px;top:186px;width:2px;height:38px;background:#000"></div>
<div class="t" style="left:891px;top:181px;font-size:27px;color:#000">50</div>
<div class="a" style="left:1076px;top:186px;width:2px;height:38px;background:#000"></div>
<div class="t" style="left:1085px;top:181px;font-size:27px;color:#000">51</div>
<div class="a" style="left:1268px;top:186px;width:2px;height:38px;background:#000"></div>
<div class="t" style="left:1277px;top:181px;font-size:27px;color:#000">52</div>
<div class="a" style="left:1462px;top:186px;width:2px;height:38px;background:#000"></div>
<div class="t" style="left:1471px;top:181px;font-size:27px;color:#000">53</div>
<div class="a" style="left:1654px;top:186px;width:2px;height:38px;background:#000"></div>
<div class="t" style="left:1663px;top:181px;font-size:27px;color:#000">54</div>
<div class="a" style="left:1846px;top:186px;width:2px;height:38px;background:#000"></div>
<div class="t" style="left:1855px;top:181px;font-size:27px;color:#000">55</div>
<div class="a" style="left:2040px;top:186px;width:2px;height:38px;background:#000"></div>
<div class="t" style="left:2049px;top:181px;font-size:27px;color:#000">56</div>
<div class="a" style="left:2232px;top:186px;width:2px;height:38px;background:#000"></div>
<div class="t" style="left:2241px;top:181px;font-size:27px;color:#000">57</div>
<div class="a" style="left:2426px;top:186px;width:2px;height:38px;background:#000"></div>
<div class="t" style="left:2435px;top:181px;font-size:27px;color:#000">58</div>
<div class="t" style="left:699px;top:181px;font-size:27px;color:#000">49</div>
<div class="t" style="left:2627px;top:181px;font-size:27px;color:#ddd;width:9px;overflow:hidden">5</div>
<div class="a" style="left:738px;top:256px;width:2px;height:12px;background:#c4a430"></div>
<div class="a" style="left:786px;top:256px;width:2px;height:12px;background:#c4a430"></div>
<div class="a" style="left:834px;top:256px;width:2px;height:12px;background:#c4a430"></div>
<div class="a" style="left:882px;top:226px;width:2px;height:42px;background:#d0ac2c"></div>
<div class="a" style="left:930px;top:256px;width:2px;height:12px;background:#c4a430"></div>
<div class="a" style="left:978px;top:256px;width:2px;height:12px;background:#c4a430"></div>
<div class="a" style="left:1026px;top:256px;width:2px;height:12px;background:#c4a430"></div>
<div class="a" style="left:1076px;top:226px;width:2px;height:42px;background:#d0ac2c"></div>
<div class="a" style="left:1124px;top:256px;width:2px;height:12px;background:#c4a430"></div>
<div class="a" style="left:1172px;top:256px;width:2px;height:12px;background:#c4a430"></div>
<div class="a" style="left:1220px;top:256px;width:2px;height:12px;background:#c4a430"></div>
<div class="a" style="left:1268px;top:226px;width:2px;height:42px;background:#d0ac2c"></div>
<div class="a" style="left:1316px;top:256px;width:2px;height:12px;background:#c4a430"></div>
<div class="a" style="left:1364px;top:256px;width:2px;height:12px;background:#c4a430"></div>
<div class="a" style="left:1412px;top:256px;width:2px;height:12px;background:#c4a430"></div>
<div class="a" style="left:1462px;top:226px;width:2px;height:42px;background:#d0ac2c"></div>
<div class="a" style="left:1510px;top:256px;width:2px;height:12px;background:#c4a430"></div>
<div class="a" style="left:1558px;top:256px;width:2px;height:12px;background:#c4a430"></div>
<div class="a" style="left:1606px;top:256px;width:2px;height:12px;background:#c4a430"></div>
<div class="a" style="left:1654px;top:226px;width:2px;height:42px;background:#d0ac2c"></div>
<div class="a" style="left:1702px;top:256px;width:2px;height:12px;background:#c4a430"></div>
<div class="a" style="left:1750px;top:256px;width:2px;height:12px;background:#c4a430"></div>
<div class="a" style="left:1798px;top:256px;width:2px;height:12px;background:#c4a430"></div>
<div class="a" style="left:1846px;top:226px;width:2px;height:42px;background:#d0ac2c"></div>
<div class="a" style="left:1894px;top:256px;width:2px;height:12px;background:#c4a430"></div>
<div class="a" style="left:1942px;top:256px;width:2px;height:12px;background:#c4a430"></div>
<div class="a" style="left:1990px;top:256px;width:2px;height:12px;background:#c4a430"></div>
<div class="a" style="left:2040px;top:226px;width:2px;height:42px;background:#d0ac2c"></div>
<div class="a" style="left:2088px;top:256px;width:2px;height:12px;background:#c4a430"></div>
<div class="a" style="left:2136px;top:256px;width:2px;height:12px;background:#c4a430"></div>
<div class="a" style="left:2184px;top:256px;width:2px;height:12px;background:#c4a430"></div>
<div class="a" style="left:2232px;top:226px;width:2px;height:42px;background:#d0ac2c"></div>
<div class="a" style="left:2280px;top:256px;width:2px;height:12px;background:#c4a430"></div>
<div class="a" style="left:2328px;top:256px;width:2px;height:12px;background:#c4a430"></div>
<div class="a" style="left:2376px;top:256px;width:2px;height:12px;background:#c4a430"></div>
<div class="a" style="left:2426px;top:226px;width:2px;height:42px;background:#d0ac2c"></div>
<div class="a" style="left:2474px;top:256px;width:2px;height:12px;background:#c4a430"></div>
<div class="a" style="left:2522px;top:256px;width:2px;height:12px;background:#c4a430"></div>
<div class="a" style="left:2570px;top:256px;width:2px;height:12px;background:#c4a430"></div>
<div class="a" style="left:702px;top:234px;width:30px;height:22px;border:2px solid #2a2410;border-radius:3px"></div>
<svg class="a" style="left:711px;top:239px" width="14" height="13"><polygon points="0,0 13,6.5 0,13" fill="#2a2410"/></svg>
<div class="t" style="left:745.52px;top:232.84px;font-size:22.90px;font-weight:normal;color:#2b2612;transform:scaleX(1.0270);transform-origin:0 0;">Crotales</div>
<svg class="a" style="left:2591px;top:225px" width="28" height="28"><path d="M2,1 H26 V13 L14,25 L2,13 Z" fill="#ffe680" stroke="#6b5a1a" stroke-width="1.2"/></svg>
<div class="btn" style="left:134px;top:130px;width:446px;height:42px"></div>
<div class="a" style="left:254px;top:131px;width:1px;height:40px;background:#2a2a2a"></div>
<div class="a" style="left:446px;top:131px;width:1px;height:40px;background:#2a2a2a"></div>
<div class="t" style="left:154.39px;top:136.62px;font-size:27.97px;font-weight:normal;color:#fff;transform:scaleX(0.9897);transform-origin:0 0;">Edit</div>
<svg class="a" style="left:225px;top:147px" width="15" height="10.8"><polyline points="1,1 7.5,8.8 14,1" fill="none" stroke="#c8c8c8" stroke-width="2"/></svg>
<div class="t" style="left:274.38px;top:136.62px;font-size:27.97px;font-weight:normal;color:#fff;transform:scaleX(0.9912);transform-origin:0 0;">Functions</div>
<svg class="a" style="left:417px;top:147px" width="15" height="10.8"><polyline points="1,1 7.5,8.8 14,1" fill="none" stroke="#c8c8c8" stroke-width="2"/></svg>
<div class="t" style="left:467.73px;top:136.62px;font-size:27.97px;font-weight:normal;color:#fff;transform:scaleX(0.9523);transform-origin:0 0;">View</div>
<svg class="a" style="left:551px;top:147px" width="15" height="10.8"><polyline points="1,1 7.5,8.8 14,1" fill="none" stroke="#c8c8c8" stroke-width="2"/></svg>
<div class="btn" style="left:596px;top:130px;width:66px;height:42px"></div>
<svg class="a" style="left:609px;top:136px" width="40" height="30"><polyline points="14,3 20,9 26,3" fill="none" stroke="#fff" stroke-width="2"/><line x1="5" y1="15" x2="35" y2="15" stroke="#fff" stroke-width="2"/><polyline points="14,27 20,21 26,27" fill="none" stroke="#fff" stroke-width="2"/></svg>
<div class="btn" style="left:678px;top:130px;width:66px;height:42px"></div>
<svg class="a" style="left:686px;top:136px" width="52" height="30"><line x1="4" y1="22.5" x2="19" y2="22.5" stroke="#fff" stroke-width="2.2"/><line x1="19" y1="22.5" x2="33" y2="6.5" stroke="#fff" stroke-width="2"/><line x1="33" y1="6.5" x2="48" y2="6.5" stroke="#fff" stroke-width="2.2"/><circle cx="19" cy="22.5" r="4.2" fill="#fff"/><circle cx="33" cy="6.5" r="4.2" fill="#fff"/></svg>
<div class="btn" style="left:760px;top:130px;width:130px;height:42px;overflow:hidden"><div class="a" style="left:65px;top:0;width:65px;height:42px;background:#3a8c45"></div></div>
<svg class="a" style="left:770px;top:141px" width="14" height="20"><polyline points="2,2 10,10 2,18" fill="none" stroke="#ddd" stroke-width="2"/></svg>
<svg class="a" style="left:788px;top:138px" width="28" height="28"><path d="M14,1 A13,13 0 1 1 13.9,1 Z" fill="#fff"/><path d="M8,28 Q14,20 20,28 Z" fill="#383838"/><circle cx="5" cy="13" r="1.8" fill="#383838"/><circle cx="8" cy="8" r="1.8" fill="#383838"/><circle cx="14" cy="6" r="1.8" fill="#383838"/><circle cx="20" cy="8" r="1.8" fill="#383838"/><circle cx="23" cy="13" r="1.8" fill="#383838"/></svg>
<svg class="a" style="left:834px;top:138px" width="28" height="28"><path d="M14,1 A13,13 0 1 1 13.9,1 Z" fill="#fff"/><path d="M8,28 Q14,20 20,28 Z" fill="#3a8c45"/><circle cx="5" cy="13" r="1.8" fill="#3a8c45"/><circle cx="8" cy="8" r="1.8" fill="#3a8c45"/><circle cx="14" cy="6" r="1.8" fill="#3a8c45"/><circle cx="20" cy="8" r="1.8" fill="#3a8c45"/><circle cx="23" cy="13" r="1.8" fill="#3a8c45"/></svg>
<svg class="a" style="left:866px;top:141px" width="14" height="20"><polyline points="2,2 10,10 2,18" fill="none" stroke="#ddd" stroke-width="2"/></svg>
<div class="btn" style="left:907px;top:130px;width:64px;height:42px;background:#3569a8;border-color:#2a2a2a"></div>
<svg class="a" style="left:914px;top:136px" width="50" height="32"><polyline points="8,12 14,18 8,24" fill="none" stroke="#fff" stroke-width="2"/><polyline points="42,12 36,18 42,24" fill="none" stroke="#fff" stroke-width="2"/><path d="M18,2 H32.3 V5 L26.5,11 V27.7 H24.5 V11 L18,5 Z" fill="#fff"/></svg>
<div class="btn" style="left:991px;top:130px;width:64px;height:42px;background:#a08220;border-color:#2a2a2a"></div>
<svg class="a" style="left:1000px;top:134px" width="50" height="36"><path d="M30.8,19 H34.5 A7,7 0 0 0 34.5,5 H22.9 A7,7 0 0 0 21.8,18.9" fill="none" stroke="#fff" stroke-width="2"/><path d="M13.6,11.3 L7.55,17.55 A7,7 0 0 0 17.45,27.45 L25.25,19.65 A7,7 0 0 0 23.5,8.6" fill="none" stroke="#fff" stroke-width="2"/></svg>
<div class="btn" style="left:1305px;top:130px;width:173px;height:42px"></div>
<div class="a" style="left:1391px;top:131px;width:1px;height:40px;background:#2a2a2a"></div>
<svg class="a" style="left:1325px;top:137px" width="22" height="30"><path d="M2,1 L2,23 L7.5,17.5 L11.5,26.5 L15,25 L11,16.5 L18,16.5 Z" fill="#fff"/></svg>
<svg class="a" style="left:1362px;top:147.5px" width="15" height="10.8"><polyline points="1,1 7.5,8.8 14,1" fill="none" stroke="#c8c8c8" stroke-width="2"/></svg>
<svg class="a" style="left:1400px;top:132px" width="40" height="36"><path d="M7,5 L16.2,8.6 L34.5,26.9 L28.9,32.5 L10.6,14.2 Z" fill="none" stroke="#fff" stroke-width="2" stroke-linejoin="round"/><line x1="16.2" y1="8.6" x2="10.6" y2="14.2" stroke="#fff" stroke-width="2"/><path d="M30.3,22.7 L34.5,26.9 Q36.5,29.7 33.5,32 L31.5,33.5 Q29,35.2 27,32.8 L24.7,28.3 Z" fill="#fff"/></svg>
<svg class="a" style="left:1450px;top:147.5px" width="15" height="10.8"><polyline points="1,1 7.5,8.8 14,1" fill="none" stroke="#c8c8c8" stroke-width="2"/></svg>
<div class="a" style="left:1558px;top:130px;width:253px;height:42px;border-radius:8px;background:#2e2e2e"></div>
<div class="t" style="left:1614.67px;top:136.99px;font-size:27.54px;font-weight:normal;color:#c8c8c8;transform:scaleX(1.0565);transform-origin:0 0;">B6</div>
<div class="t" style="left:1670.68px;top:136.99px;font-size:27.54px;font-weight:normal;color:#c8c8c8;transform:scaleX(0.9254);transform-origin:0 0;">51 4 1 1</div>
<div class="t" style="left:1830.35px;top:136.99px;font-size:27.54px;font-weight:normal;color:#c8c8c8;transform:scaleX(0.9807);transform-origin:0 0;">Snap:</div>
<div class="btn" style="left:1907px;top:130px;width:343px;height:42px"></div>
<div class="t" style="left:1926.62px;top:136.62px;font-size:27.97px;font-weight:normal;color:#fff;transform:scaleX(0.9862);transform-origin:0 0;">Smart</div>
<svg class="a" style="left:2220px;top:138px" width="18" height="26"><polyline points="2,9 9,2 16,9" fill="none" stroke="#c8c8c8" stroke-width="2"/><polyline points="2,17 9,24 16,17" fill="none" stroke="#c8c8c8" stroke-width="2"/></svg>
<div class="btn" style="left:2266px;top:130px;width:65px;height:42px;background:#3569a8;border-color:#2a2a2a"></div>
<svg class="a" style="left:2283px;top:138px" width="32" height="26"><line x1="3" y1="1" x2="3" y2="25" stroke="#fff" stroke-width="2"/><line x1="29" y1="1" x2="29" y2="25" stroke="#fff" stroke-width="2"/><line x1="6" y1="13" x2="26" y2="13" stroke="#fff" stroke-width="2"/><polyline points="11,8 6,13 11,18" fill="none" stroke="#fff" stroke-width="2"/><polyline points="21,8 26,13 21,18" fill="none" stroke="#fff" stroke-width="2"/></svg>
<div class="btn" style="left:2349px;top:130px;width:300px;height:42px"></div>
<div class="a" style="left:2498px;top:131px;width:1px;height:40px;background:#2a2a2a"></div>
<svg class="a" style="left:2362px;top:137px" width="18" height="30"><line x1="9" y1="3" x2="9" y2="27" stroke="#c8c8c8" stroke-width="2"/><polyline points="3,8 9,2 15,8" fill="none" stroke="#c8c8c8" stroke-width="2"/><polyline points="3,22 9,28 15,22" fill="none" stroke="#c8c8c8" stroke-width="2"/></svg>
<svg class="a" style="left:2504px;top:142px" width="30" height="18"><line x1="3" y1="9" x2="27" y2="9" stroke="#c8c8c8" stroke-width="2"/><polyline points="8,3 2,9 8,15" fill="none" stroke="#c8c8c8" stroke-width="2"/><polyline points="22,3 28,9 22,15" fill="none" stroke="#c8c8c8" stroke-width="2"/></svg>
<div class="a" style="left:2394px;top:148px;width:87px;height:7px;border-radius:4px;background:#2a2a2a"></div>
<div class="a" style="left:2396px;top:135px;width:2px;height:4px;background:#a0a0a0"></div>
<div class="a" style="left:2401px;top:135px;width:2px;height:4px;background:#a0a0a0"></div>
<div class="a" style="left:2406px;top:135px;width:2px;height:4px;background:#a0a0a0"></div>
<div class="a" style="left:2426px;top:135px;width:2px;height:4px;background:#a0a0a0"></div>
<div class="a" style="left:2453px;top:135px;width:2px;height:4px;background:#a0a0a0"></div>
<div class="a" style="left:2481px;top:135px;width:2px;height:4px;background:#a0a0a0"></div>
<svg class="a" style="left:2439px;top:139px" width="20" height="22"><path d="M10,0.5 L19,10 V16 Q19,21 14,21 H6 Q1,21 1,16 V10 Z" fill="#a5a5a5"/></svg>
<div class="a" style="left:2544px;top:148px;width:90px;height:7px;border-radius:4px;background:#2a2a2a"></div>
<div class="a" style="left:2546px;top:135px;width:2px;height:4px;background:#a0a0a0"></div>
<div class="a" style="left:2551px;top:135px;width:2px;height:4px;background:#a0a0a0"></div>
<div class="a" style="left:2556px;top:135px;width:2px;height:4px;background:#a0a0a0"></div>
<div class="a" style="left:2576px;top:135px;width:2px;height:4px;background:#a0a0a0"></div>
<div class="a" style="left:2603px;top:135px;width:2px;height:4px;background:#a0a0a0"></div>
<div class="a" style="left:2631px;top:135px;width:2px;height:4px;background:#a0a0a0"></div>
<svg class="a" style="left:2570px;top:139px" width="20" height="22"><path d="M10,0.5 L19,10 V16 Q19,21 14,21 H6 Q1,21 1,16 V10 Z" fill="#a5a5a5"/></svg>
<div class="t" style="left:236.31px;top:197.83px;font-size:26.09px;font-weight:normal;color:#ececec;transform:scaleX(1.0493);transform-origin:0 0;-webkit-text-stroke:0.7px #ececec;">119 Notes selected</div>
<div class="t" style="left:294.33px;top:228.91px;font-size:22.46px;font-weight:normal;color:#b5b5b5;transform:scaleX(1.0619);transform-origin:0 0;">in Crotales</div>
<div class="btn" style="left:589px;top:201px;width:65px;height:41px;background:#3e3e3e"></div>
<svg class="a" style="left:607px;top:207px" width="28" height="28"><rect x="2" y="2" width="24" height="24" rx="2" fill="#fff"/><rect x="4" y="8" width="20" height="16" fill="#3e3e3e"/><polyline points="9,13 14,18 19,13" fill="none" stroke="#fff" stroke-width="1.8"/></svg>
<div class="t" style="left:146.46px;top:637.26px;font-size:27.10px;font-weight:normal;color:#d2d2d2;transform:scaleX(1.0002);transform-origin:0 0;">Time Quantize (classic)</div>
<div class="a" style="left:148px;top:670px;width:426px;height:132px;border-radius:9px;background:#4f4f4f"></div>
<div class="a" style="left:148px;top:670px;width:426px;height:42px;border-radius:8px;background:#4a4a4a;border:1px solid #383838;box-shadow:0 1px 1px rgba(0,0,0,.25)"></div>
<div class="a" style="left:510px;top:670px;width:2px;height:41px;background:#3e3e3e"></div>
<div class="t" style="left:260.15px;top:676.59px;font-size:27.54px;font-weight:normal;color:#fff;transform:scaleX(0.9739);transform-origin:0 0;">1/16 Note</div>
<svg class="a" style="left:480px;top:678px" width="18" height="26"><polyline points="2,9 9,2 16,9" fill="none" stroke="#c8c8c8" stroke-width="2"/><polyline points="2,17 9,24 16,17" fill="none" stroke="#c8c8c8" stroke-width="2"/></svg>
<div class="t" style="left:531.33px;top:676.59px;font-size:27.54px;font-weight:normal;color:#fff;transform:scaleX(1.0681);transform-origin:0 0;">Q</div>
<div class="t" style="left:157.89px;top:723.09px;font-size:26.96px;font-weight:normal;color:#d2d2d2;transform:scaleX(1.0462);transform-origin:0 0;">Strength</div>
<div class="a" style="left:280px;top:734px;width:220px;height:8px;border-radius:4px;background:#2c2c2c"></div>
<div class="a" style="left:476px;top:727px;width:22px;height:22px;border-radius:50%;background:#a9a9a9"></div>
<div class="t" style="left:514.21px;top:723.09px;font-size:26.96px;font-weight:normal;color:#fff;transform:scaleX(1.0148);transform-origin:0 0;">100</div>
<div class="t" style="left:189.93px;top:759.09px;font-size:26.96px;font-weight:normal;color:#d2d2d2;transform:scaleX(1.0163);transform-origin:0 0;">Swing</div>
<div class="a" style="left:280px;top:770px;width:220px;height:8px;border-radius:4px;background:#2c2c2c"></div>
<div class="a" style="left:282px;top:763px;width:22px;height:22px;border-radius:50%;background:#a9a9a9"></div>
<div class="t" style="left:526.80px;top:759.09px;font-size:26.96px;font-weight:normal;color:#fff;transform:scaleX(1.1129);transform-origin:0 0;">0</div>
<div class="t" style="left:145.66px;top:946.64px;font-size:27.25px;font-weight:normal;color:#d2d2d2;transform:scaleX(0.9809);transform-origin:0 0;">Scale Quantize</div>
<div class="a" style="left:148px;top:982px;width:426px;height:42px;border-radius:8px;background:#4a4a4a;border:1px solid #383838;box-shadow:0 1px 1px rgba(0,0,0,.25)"></div>
<div class="a" style="left:270px;top:983px;width:2px;height:40px;background:#3e3e3e"></div>
<div class="a" style="left:510px;top:983px;width:2px;height:40px;background:#3e3e3e"></div>
<div class="t" style="left:179.46px;top:988.59px;font-size:27.54px;font-weight:normal;color:#fff;transform:scaleX(1.0466);transform-origin:0 0;">Off</div>
<svg class="a" style="left:240px;top:991px" width="18" height="26"><polyline points="2,9 9,2 16,9" fill="none" stroke="#c8c8c8" stroke-width="2"/><polyline points="2,17 9,24 16,17" fill="none" stroke="#c8c8c8" stroke-width="2"/></svg>
<div class="t" style="left:351.10px;top:988.59px;font-size:27.54px;font-weight:normal;color:#fff;transform:scaleX(0.9972);transform-origin:0 0;">Major</div>
<svg class="a" style="left:480px;top:991px" width="18" height="26"><polyline points="2,9 9,2 16,9" fill="none" stroke="#c8c8c8" stroke-width="2"/><polyline points="2,17 9,24 16,17" fill="none" stroke="#c8c8c8" stroke-width="2"/></svg>
<div class="t" style="left:530.47px;top:988.59px;font-size:27.54px;font-weight:normal;color:#fff;transform:scaleX(1.1108);transform-origin:0 0;">Q</div>
<div class="t" style="left:146.73px;top:1165.23px;font-size:26.67px;font-weight:normal;color:#d2d2d2;transform:scaleX(1.0277);transform-origin:0 0;">Velocity</div>
<div class="a" style="left:148px;top:1198px;width:426px;height:49px;border-radius:9px;background:#4f4f4f"></div>
<div class="a" style="left:168px;top:1220px;width:334px;height:8px;border-radius:4px;background:#2c2c2c"></div>
<div class="a" style="left:182px;top:1213px;width:22px;height:22px;border-radius:50%;background:#a9a9a9"></div>
<div class="t" style="left:528.32px;top:1213.09px;font-size:26.96px;font-weight:normal;color:#fff;transform:scaleX(1.2500);transform-origin:0 0;">6</div>
</body></html>
